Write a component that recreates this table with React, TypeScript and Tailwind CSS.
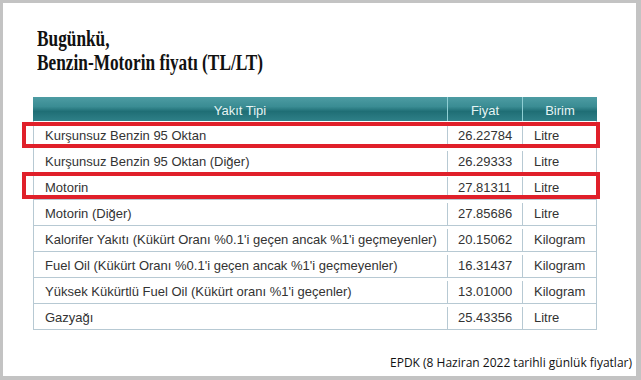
import React from "react";

const rows: [string, string, string][] = [
  ["Kurşunsuz Benzin 95 Oktan", "26.22784", "Litre"],
  ["Kurşunsuz Benzin 95 Oktan (Diğer)", "26.29333", "Litre"],
  ["Motorin", "27.81311", "Litre"],
  ["Motorin (Diğer)", "27.85686", "Litre"],
  ["Kalorifer Yakıtı (Kükürt Oranı %0.1'i geçen ancak %1'i geçmeyenler)", "20.15062", "Kilogram"],
  ["Fuel Oil (Kükürt Oranı %0.1'i geçen ancak %1'i geçmeyenler)", "16.31437", "Kilogram"],
  ["Yüksek Kükürtlü Fuel Oil (Kükürt oranı %1'i geçenler)", "13.01000", "Kilogram"],
  ["Gazyağı", "25.43356", "Litre"],
];

export default function App() {
  return (
    <div className="w-[641px] h-[380px] bg-[#c3c3c3] pt-[3px] pl-[3px] pr-[5px] pb-[4px]">
      <div className="w-full h-full bg-white flex flex-col pl-[30px] pr-[4px]">
        <div
          className="mt-[23px] ml-[4px] text-[#111] font-bold text-[24px] leading-[24px] origin-left scale-x-[0.72] whitespace-nowrap"
          style={{ fontFamily: '"Liberation Serif", serif' }}
        >
          <div>Bugünkü,</div>
          <div>Benzin-Motorin fiyatı (TL/LT)</div>
        </div>
        <div className="relative mt-[23px] w-[564px]" style={{ fontFamily: '"Liberation Sans", Arial, sans-serif' }}>
          <div className="flex h-[24px] text-[13px] text-[#e6f4f4] bg-[linear-gradient(#4d9ca3_0%,#3a8c93_40%,#1f6e75_60%,#2f8088_100%)]">
            <div className="w-[415px] pt-[3px] flex items-center justify-center border-r border-[#8fcfd4]">Yakıt Tipi</div>
            <div className="w-[75px] pt-[3px] flex items-center justify-center border-r border-[#8fcfd4]">Fiyat</div>
            <div className="flex-1 pt-[3px] flex items-center justify-center">Birim</div>
          </div>
          <div className="border-l border-b border-r border-[#b7c9d3]">
            {rows.map((r, i) => (
              <div key={i} className={`flex h-[26px] pt-[3px] text-[13px] text-[#333] ${i > 0 ? "border-t border-[#b7c9d3]" : ""}`}>
                <div className="w-[414px] pl-[11px] flex items-center border-r border-[#b7c9d3] whitespace-nowrap">{r[0]}</div>
                <div className="w-[75px] pl-[10px] flex items-center border-r border-[#b7c9d3]">{r[1]}</div>
                <div className="flex-1 pl-[11px] flex items-center">{r[2]}</div>
              </div>
            ))}
          </div>
          <div className="absolute left-[-11px] top-[25px] w-[578px] h-[26px] border-[4px] border-[#e0202a]" />
          <div className="absolute left-[-11px] top-[75px] w-[578px] h-[27px] border-[4px] border-[#e0202a]" />
        </div>
        <div className="flex-1" />
        <div
          className="self-end mb-[4px] text-[12px] text-[#111] whitespace-nowrap"
          style={{ fontFamily: '"Open Sans", sans-serif' }}
        >
          EPDK (8 Haziran 2022 tarihli günlük fiyatlar)
        </div>
      </div>
    </div>
  );
}
